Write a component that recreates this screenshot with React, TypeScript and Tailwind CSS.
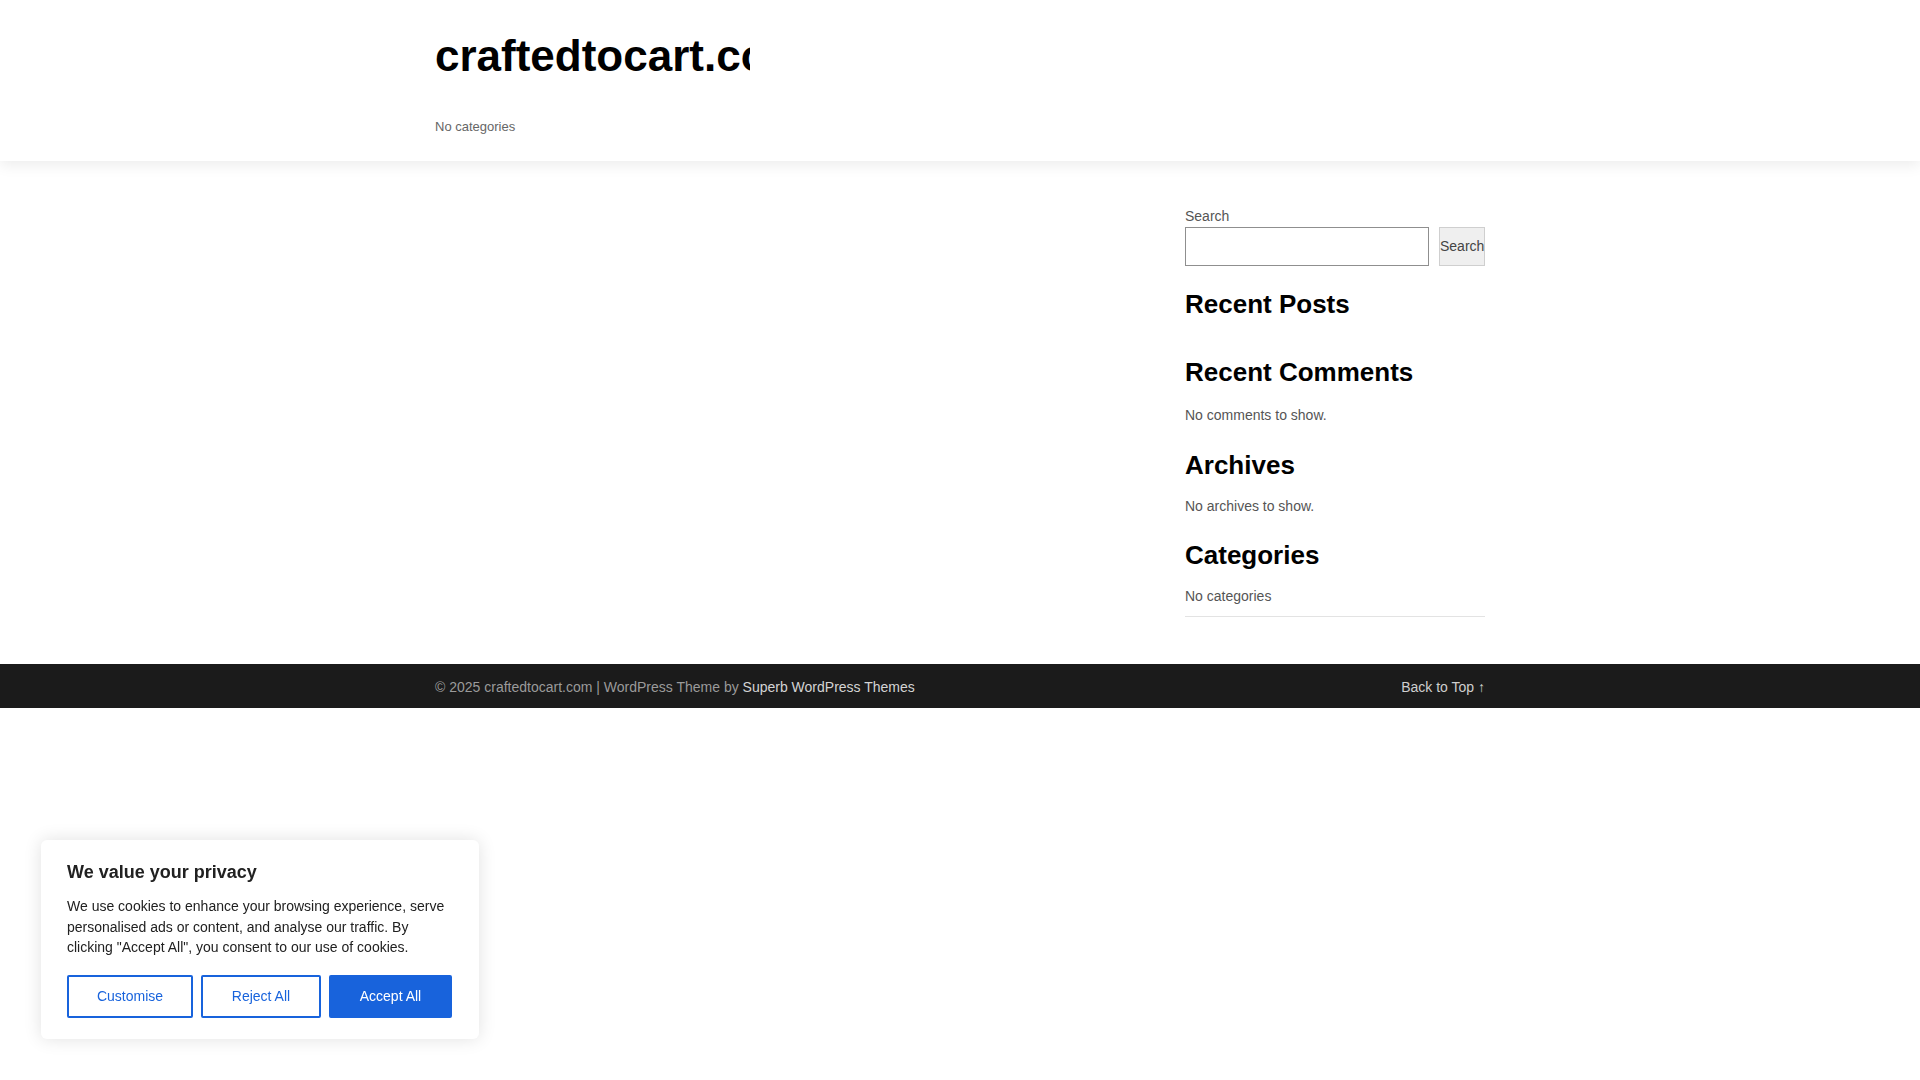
import React from 'react';

const App = () => {
  return (
    <div className="min-h-screen bg-white font-['Liberation_Sans',Arial,sans-serif] text-[#111]">
      {/* header */}
      <header className="relative z-10 h-[161px] bg-white shadow-[0_4px_14px_rgba(0,0,0,0.08)]">
        <div className="mx-auto w-[1050px] pt-[34px]">
          <div className="w-[315px] overflow-hidden whitespace-nowrap">
            <h1 className="text-[44px] font-bold leading-[44px] text-black">craftedtocart.com</h1>
          </div>
          <p className="mt-[41px] text-[13px] leading-[16px] text-[#666]">No categories</p>
        </div>
      </header>

      {/* content */}
      <main className="mx-auto flex w-[1050px] justify-end pt-[45px]">
        <aside className="w-[300px]">
          <label className="block text-[14px] leading-[20px] text-[#555]">Search</label>
          <div className="mt-[1px] flex gap-[10px]">
            <input className="h-[39px] w-[244px] border border-[#8f8f8f] bg-white outline-none" />
            <button className="h-[39px] w-[46px] border border-[#cfcfcf] bg-[#efefef] px-0 text-center text-[14px] text-[#444]">
              Search
            </button>
          </div>

          <h2 className="mt-[23px] text-[26px] font-bold leading-[31px] text-black">Recent Posts</h2>

          <h2 className="mt-[37px] text-[26px] font-bold leading-[31px] text-black">Recent Comments</h2>
          <p className="mt-[17px] text-[14px] leading-[20px] text-[#555]">No comments to show.</p>

          <h2 className="mt-[25px] text-[26px] font-bold leading-[31px] text-black">Archives</h2>
          <p className="mt-[15px] text-[14px] leading-[20px] text-[#555]">No archives to show.</p>

          <h2 className="mt-[24px] text-[26px] font-bold leading-[31px] text-black">Categories</h2>
          <p className="mt-[15px] text-[14px] leading-[20px] text-[#555]">No categories</p>
          <div className="mt-[10px] h-px bg-[#e3e3e3]" />
        </aside>
      </main>

      {/* footer */}
      <footer className="mt-[47px] h-[44px] bg-[#1b1b1b]">
        <div className="mx-auto flex h-full w-[1050px] items-center justify-between pt-[2px] text-[14px]">
          <p className="text-[#9a9a9a]">
            © 2025 craftedtocart.com | WordPress Theme by <a className="text-[#d4d4d4]">Superb WordPress Themes</a>
          </p>
          <a className="text-[#cfcfcf]">Back to Top ↑</a>
        </div>
      </footer>

      {/* cookie banner */}
      <div className="fixed bottom-[41px] left-[41px] w-[438px] rounded-[6px] bg-white px-[26px] pb-[21px] pt-[20px] shadow-[0_0_18px_rgba(0,0,0,0.12)]">
        <h3 className="text-[18px] font-bold leading-[24px] text-[#212121]">We value your privacy</h3>
        <p className="mt-[12px] text-[14px] leading-[20.6px] text-[#212121]">
          We use cookies to enhance your browsing experience, serve personalised ads or content, and analyse our traffic. By clicking "Accept All", you consent to our use of cookies.
        </p>
        <div className="mt-[17px] flex gap-[8px]">
          <button className="h-[43px] w-[126px] rounded-[2px] border-2 border-[#1863dc] bg-white text-[14px] text-[#1863dc]">Customise</button>
          <button className="h-[43px] w-[120px] rounded-[2px] border-2 border-[#1863dc] bg-white text-[14px] text-[#1863dc]">Reject All</button>
          <button className="h-[43px] w-[123px] rounded-[2px] border-2 border-[#1863dc] bg-[#1863dc] text-[14px] text-white">Accept All</button>
        </div>
      </div>
    </div>
  );
};

export default App;
